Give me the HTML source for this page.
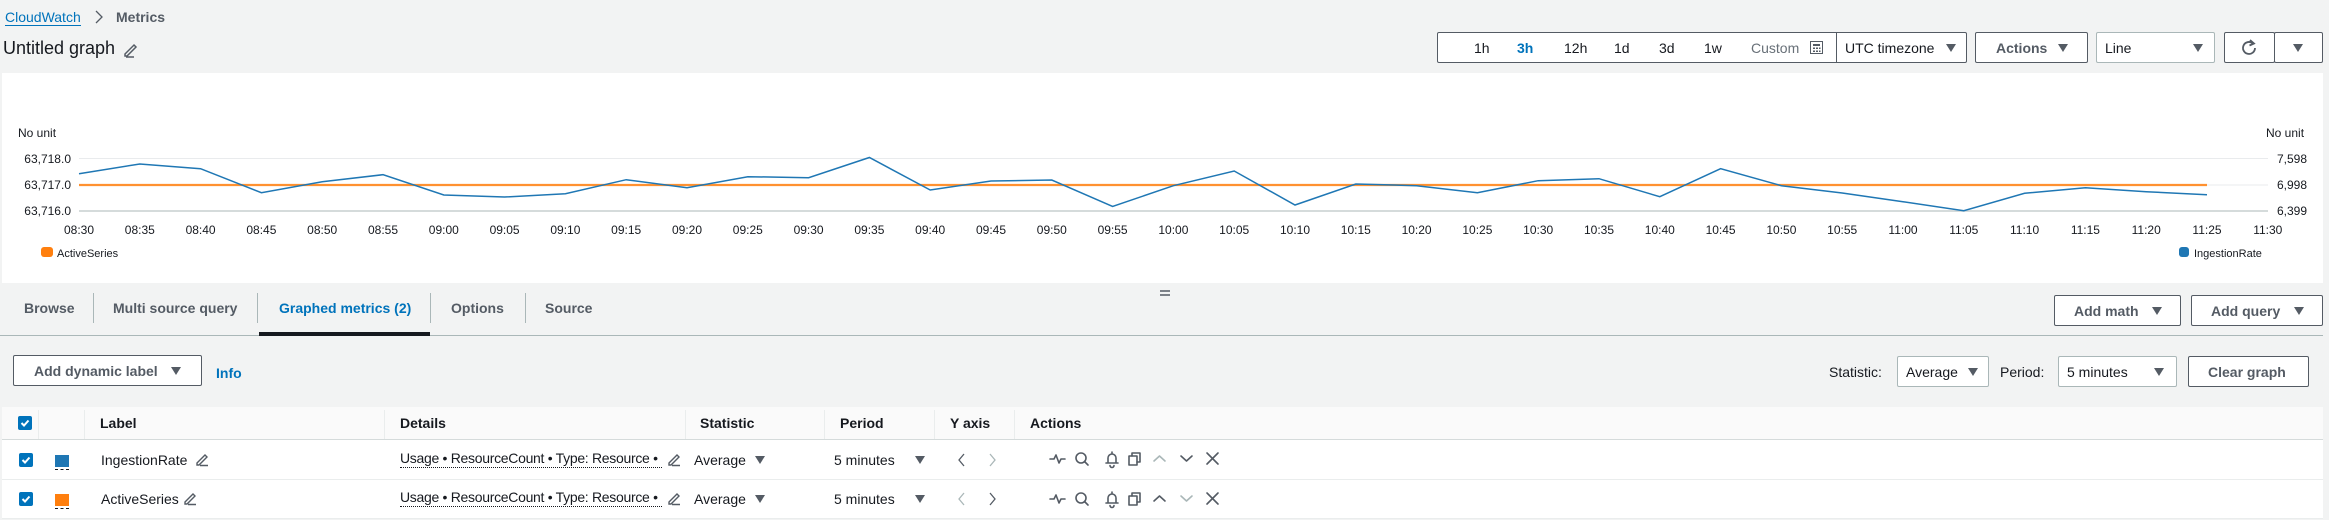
<!DOCTYPE html>
<html><head><meta charset="utf-8"><style>
*{box-sizing:border-box;margin:0;padding:0}
body{width:2329px;height:520px;overflow:hidden;background:#f2f3f3;font-family:"Liberation Sans",sans-serif;font-size:14px;color:#16191f;position:relative}
.a{position:absolute;white-space:nowrap}
.btn{position:absolute;border:1px solid #545b64;background:#fff;border-radius:2px}
.bt{font-weight:bold;color:#545b64}
.tri{display:block;width:0;height:0;border-left:5px solid transparent;border-right:5px solid transparent;border-top:8px solid #545b64}
.cb{position:absolute;width:14px;height:14px;background:#0073bb;border-radius:2px}
.vd{position:absolute;width:1px;background:#eaeded}
.hl{position:absolute;height:1px;background:#eaeded;left:2px;width:2321px}
svg{position:absolute;overflow:visible}
</style></head><body>
<!-- breadcrumb -->
<div class="a" style="left:5px;top:9px;color:#0073bb;font-size:14px;border-bottom:1px solid #0073bb;line-height:16px">CloudWatch</div>
<svg style="left:94px;top:9px" width="10" height="16"><path d="M2 2l6 6-6 6" fill="none" stroke="#545b64" stroke-width="1.3"/></svg>
<div class="a" style="left:116px;top:9px;color:#545b64;font-size:14px;font-weight:bold;line-height:16px">Metrics</div>
<div class="a" style="left:3px;top:37px;font-size:18px;line-height:22px">Untitled graph</div>
<svg style="left:122px;top:42px" width="16" height="16"><path d="M3 12L12 3l2 2-9 9H3z M4 15h8" fill="none" stroke="#545b64" stroke-width="1.5"/></svg>

<!-- time range toolbar -->
<div class="btn" style="left:1437px;top:32px;width:530px;height:31px"></div>
<div class="a" style="left:1474px;top:40px">1h</div>
<div class="a" style="left:1517px;top:40px;color:#0073bb;font-weight:bold">3h</div>
<div class="a" style="left:1564px;top:40px">12h</div>
<div class="a" style="left:1614px;top:40px">1d</div>
<div class="a" style="left:1659px;top:40px">3d</div>
<div class="a" style="left:1704px;top:40px">1w</div>
<div class="a" style="left:1751px;top:40px;color:#687078">Custom</div>
<svg style="left:1810px;top:41px" width="13" height="13"><rect x="0.5" y="0.5" width="12" height="12" fill="none" stroke="#545b64"/><path d="M3 3h7v2H3zM3 6.5h2v1.5H3zM6 6.5h2v1.5H6zM9 6.5h1.5v1.5H9zM3 9.5h2V11H3zM6 9.5h2V11H6zM9 9.5h1.5V11H9z" fill="#545b64"/></svg>
<div class="a" style="left:1836px;top:32px;width:1px;height:31px;background:#545b64"></div>
<div class="a" style="left:1845px;top:40px">UTC timezone</div>
<div class="a" style="left:1946px;top:44px"><span class="tri"></span></div>
<div class="btn" style="left:1975px;top:32px;width:113px;height:31px"></div>
<div class="a bt" style="left:1996px;top:40px">Actions</div>
<div class="a" style="left:2058px;top:44px"><span class="tri"></span></div>
<div class="btn" style="left:2096px;top:32px;width:119px;height:31px;border-color:#aab7b8"></div>
<div class="a" style="left:2105px;top:40px">Line</div>
<div class="a" style="left:2193px;top:44px"><span class="tri"></span></div>
<div class="btn" style="left:2224px;top:32px;width:51px;height:31px"></div>
<svg style="left:2241px;top:39px" width="16" height="17"><path d="M12 4.5A6 6 0 1 0 14 9" fill="none" stroke="#545b64" stroke-width="1.8"/><path d="M9 1l4 3.5-4.5 2" fill="none" stroke="#545b64" stroke-width="1.8"/></svg>
<div class="btn" style="left:2274px;top:32px;width:49px;height:31px"></div>
<div class="a" style="left:2293px;top:44px"><span class="tri"></span></div>

<!-- chart panel -->
<div class="a" style="left:2px;top:73px;width:2321px;height:210px;background:#fff"></div>
<div class="a" style="left:18px;top:126px;font-size:12px">No unit</div>
<div class="a" style="left:2266px;top:126px;font-size:12px">No unit</div>
<svg style="left:0;top:0" width="2329" height="290">
<g stroke="#e9ebed" stroke-width="1"><line x1="79" y1="158.5" x2="2268" y2="158.5"/><line x1="79" y1="185" x2="2268" y2="185"/></g>
<line x1="79" y1="211" x2="2268" y2="211" stroke="#d5dbdb" stroke-width="2"/>
<g font-family="Liberation Sans" font-size="12" fill="#16191f">
<text x="71" y="163" text-anchor="end">63,718.0</text>
<text x="71" y="189" text-anchor="end">63,717.0</text>
<text x="71" y="215" text-anchor="end">63,716.0</text>
<text x="2277" y="163">7,598</text>
<text x="2277" y="189">6,998</text>
<text x="2277" y="215">6,399</text>
<g text-anchor="middle">
<text x="79" y="234">08:30</text><text x="139.8" y="234">08:35</text><text x="200.6" y="234">08:40</text><text x="261.4" y="234">08:45</text><text x="322.2" y="234">08:50</text><text x="383" y="234">08:55</text><text x="443.8" y="234">09:00</text><text x="504.6" y="234">09:05</text><text x="565.4" y="234">09:10</text><text x="626.2" y="234">09:15</text><text x="687" y="234">09:20</text><text x="747.8" y="234">09:25</text><text x="808.6" y="234">09:30</text><text x="869.4" y="234">09:35</text><text x="930.2" y="234">09:40</text><text x="991" y="234">09:45</text><text x="1051.8" y="234">09:50</text><text x="1112.6" y="234">09:55</text><text x="1173.4" y="234">10:00</text><text x="1234.2" y="234">10:05</text><text x="1295" y="234">10:10</text><text x="1355.8" y="234">10:15</text><text x="1416.6" y="234">10:20</text><text x="1477.4" y="234">10:25</text><text x="1538.2" y="234">10:30</text><text x="1599" y="234">10:35</text><text x="1659.8" y="234">10:40</text><text x="1720.6" y="234">10:45</text><text x="1781.4" y="234">10:50</text><text x="1842.2" y="234">10:55</text><text x="1903" y="234">11:00</text><text x="1963.8" y="234">11:05</text><text x="2024.6" y="234">11:10</text><text x="2085.4" y="234">11:15</text><text x="2146.2" y="234">11:20</text><text x="2207" y="234">11:25</text><text x="2267.8" y="234">11:30</text>
</g>
<text x="57" y="257" font-size="11">ActiveSeries</text>
<text x="2194" y="257" font-size="11">IngestionRate</text>
</g>
<line x1="79" y1="185" x2="2207" y2="185" stroke="#ff9130" stroke-width="2.2"/>
<polyline fill="none" stroke="#1f77b4" stroke-width="1.5" points="79,173.7 139.8,164 200.6,168.7 261.4,192.7 322.2,181.7 383,174.7 443.8,195 504.6,197 565.4,193.7 626.2,179.7 687,187.7 747.8,176.7 808.6,177.7 869.4,157.5 930.2,190 991,181 1051.8,180 1112.6,206.5 1173.4,185.7 1234.2,171 1295,205 1355.8,184 1416.6,185.7 1477.4,192.7 1538.2,180.7 1599,178.7 1659.8,196.7 1720.6,168.7 1781.4,185.7 1842.2,193 1903,201.7 1963.8,210.7 2024.6,193.3 2085.4,187.7 2146.2,191.7 2207,194.7"/>
<rect x="41" y="247" width="12" height="10" rx="3" fill="#ff7f0e"/>
<rect x="2179" y="247" width="10" height="10" rx="3" fill="#1f77b4"/>
<g stroke="#545b64" stroke-width="1.5"><line x1="1160" y1="291" x2="1170" y2="291"/><line x1="1160" y1="295" x2="1170" y2="295"/></g>
</svg>

<!-- tabs -->
<div class="a bt" style="left:24px;top:300px">Browse</div>
<div class="a" style="left:93px;top:293px;width:1px;height:30px;background:#aab7b8"></div>
<div class="a bt" style="left:113px;top:300px">Multi source query</div>
<div class="a" style="left:257px;top:293px;width:1px;height:30px;background:#aab7b8"></div>
<div class="a" style="left:279px;top:300px;font-weight:bold;color:#0073bb">Graphed metrics (2)</div>
<div class="a" style="left:430px;top:293px;width:1px;height:30px;background:#aab7b8"></div>
<div class="a bt" style="left:451px;top:300px">Options</div>
<div class="a" style="left:525px;top:293px;width:1px;height:30px;background:#aab7b8"></div>
<div class="a bt" style="left:545px;top:300px">Source</div>
<div class="a" style="left:0;top:335px;width:2323px;height:1px;background:#aab7b8"></div>
<div class="a" style="left:259px;top:332px;width:171px;height:4px;background:#16191f"></div>
<div class="btn" style="left:2054px;top:295px;width:127px;height:31px"></div>
<div class="a bt" style="left:2074px;top:303px">Add math</div>
<div class="a" style="left:2152px;top:307px"><span class="tri"></span></div>
<div class="btn" style="left:2191px;top:295px;width:132px;height:31px"></div>
<div class="a bt" style="left:2211px;top:303px">Add query</div>
<div class="a" style="left:2294px;top:307px"><span class="tri"></span></div>

<!-- second toolbar -->
<div class="btn" style="left:13px;top:355px;width:189px;height:31px"></div>
<div class="a bt" style="left:34px;top:363px">Add dynamic label</div>
<div class="a" style="left:171px;top:367px"><span class="tri"></span></div>
<div class="a" style="left:216px;top:365px;color:#0073bb;font-weight:bold">Info</div>
<div class="a" style="left:1829px;top:364px">Statistic:</div>
<div class="btn" style="left:1897px;top:356px;width:92px;height:31px;border-color:#aab7b8"></div>
<div class="a" style="left:1906px;top:364px">Average</div>
<div class="a" style="left:1968px;top:368px"><span class="tri"></span></div>
<div class="a" style="left:2000px;top:364px">Period:</div>
<div class="btn" style="left:2058px;top:356px;width:119px;height:31px;border-color:#aab7b8"></div>
<div class="a" style="left:2067px;top:364px">5 minutes</div>
<div class="a" style="left:2154px;top:368px"><span class="tri"></span></div>
<div class="btn" style="left:2188px;top:356px;width:121px;height:31px"></div>
<div class="a bt" style="left:2208px;top:364px">Clear graph</div>

<!-- table -->
<div class="a" style="left:2px;top:407px;width:2321px;height:32px;background:#fafafa"></div>
<div class="a" style="left:2px;top:439px;width:2321px;height:80px;background:#fff"></div>
<div class="hl" style="top:439px;background:#d5dbdb"></div>
<div class="hl" style="top:479px"></div>
<div class="hl" style="top:518px"></div>
<div class="vd" style="left:38px;top:410px;height:29px"></div>
<div class="vd" style="left:84px;top:410px;height:29px"></div>
<div class="vd" style="left:384px;top:410px;height:29px"></div>
<div class="vd" style="left:685px;top:410px;height:29px"></div>
<div class="vd" style="left:824px;top:410px;height:29px"></div>
<div class="vd" style="left:934px;top:410px;height:29px"></div>
<div class="vd" style="left:1014px;top:410px;height:29px"></div>
<div class="cb" style="left:18px;top:416px"></div>
<svg style="left:18px;top:416px" width="14" height="14"><path d="M3.5 7l2.5 2.5 4.5-5" fill="none" stroke="#fff" stroke-width="2"/></svg>
<div class="a" style="left:100px;top:415px;font-weight:bold">Label</div>
<div class="a" style="left:400px;top:415px;font-weight:bold">Details</div>
<div class="a" style="left:700px;top:415px;font-weight:bold">Statistic</div>
<div class="a" style="left:840px;top:415px;font-weight:bold">Period</div>
<div class="a" style="left:950px;top:415px;font-weight:bold">Y axis</div>
<div class="a" style="left:1030px;top:415px;font-weight:bold">Actions</div>

<!-- row 1 -->
<div class="cb" style="left:19px;top:453px"></div>
<svg style="left:19px;top:453px" width="14" height="14"><path d="M3.5 7l2.5 2.5 4.5-5" fill="none" stroke="#fff" stroke-width="2"/></svg>
<div class="a" style="left:55px;top:455px;width:14px;height:12px;background:#1f77b4"></div>
<div class="a" style="left:55px;top:469px;width:14px;border-top:1px dashed #16191f"></div>
<div class="a" style="left:101px;top:452px">IngestionRate</div>
<svg style="left:195px;top:452px" width="14" height="14"><path d="M2 11L10 3l2 2-8 8H2z M5 13.5h8" fill="none" stroke="#545b64" stroke-width="1.4"/></svg>
<div class="a" style="left:400px;top:450px;border-bottom:1px dotted #16191f;line-height:17px;letter-spacing:-0.3px;width:262px;overflow:hidden">Usage • ResourceCount • Type: Resource •</div>
<svg style="left:667px;top:452px" width="14" height="14"><path d="M2 11L10 3l2 2-8 8H2z M5 13.5h8" fill="none" stroke="#545b64" stroke-width="1.4"/></svg>
<div class="a" style="left:694px;top:452px">Average</div>
<div class="a" style="left:755px;top:456px"><span class="tri"></span></div>
<div class="a" style="left:834px;top:452px">5 minutes</div>
<div class="a" style="left:915px;top:456px"><span class="tri"></span></div>
<svg style="left:955px;top:452px" width="45" height="16"><path d="M9 2L4 8l5 6" fill="none" stroke="#545b64" stroke-width="1.3"/><path d="M35 2l5 6-5 6" fill="none" stroke="#aab7b8" stroke-width="1.3"/></svg>

<!-- row 2 -->
<div class="cb" style="left:19px;top:492px"></div>
<svg style="left:19px;top:492px" width="14" height="14"><path d="M3.5 7l2.5 2.5 4.5-5" fill="none" stroke="#fff" stroke-width="2"/></svg>
<div class="a" style="left:55px;top:494px;width:14px;height:12px;background:#ff7f0e"></div>
<div class="a" style="left:55px;top:508px;width:14px;border-top:1px dashed #16191f"></div>
<div class="a" style="left:101px;top:491px">ActiveSeries</div>
<svg style="left:183px;top:491px" width="14" height="14"><path d="M2 11L10 3l2 2-8 8H2z M5 13.5h8" fill="none" stroke="#545b64" stroke-width="1.4"/></svg>
<div class="a" style="left:400px;top:489px;border-bottom:1px dotted #16191f;line-height:17px;letter-spacing:-0.3px;width:262px;overflow:hidden">Usage • ResourceCount • Type: Resource •</div>
<svg style="left:667px;top:491px" width="14" height="14"><path d="M2 11L10 3l2 2-8 8H2z M5 13.5h8" fill="none" stroke="#545b64" stroke-width="1.4"/></svg>
<div class="a" style="left:694px;top:491px">Average</div>
<div class="a" style="left:755px;top:495px"><span class="tri"></span></div>
<div class="a" style="left:834px;top:491px">5 minutes</div>
<div class="a" style="left:915px;top:495px"><span class="tri"></span></div>
<svg style="left:955px;top:491px" width="45" height="16"><path d="M9 2L4 8l5 6" fill="none" stroke="#aab7b8" stroke-width="1.3"/><path d="M35 2l5 6-5 6" fill="none" stroke="#545b64" stroke-width="1.3"/></svg>

<!-- action icons -->
<svg style="left:1048px;top:450px" width="180" height="60">
<g fill="none" stroke="#545b64" stroke-width="1.6" stroke-linecap="round" stroke-linejoin="round">
<path d="M2 9h4l2-4 3 8 2-4h4"/>
<circle cx="33" cy="8" r="5"/><path d="M36.5 11.5l3.5 3.5"/>
<path d="M58 13h12M60 13V8a4 4 0 0 1 8 0v5M62 15.5a2 2 0 0 0 4 0M64 2v2"/>
<rect x="81" y="6" width="8" height="9"/><path d="M84 6V3h8v9h-3"/>
<path d="M106 11l5.5-5 5.5 5" stroke="#aab7b8"/>
<path d="M133 6l5.5 5 5.5-5"/>
<path d="M159 3l11 11M170 3l-11 11"/>
<g transform="translate(0,40)">
<path d="M2 9h4l2-4 3 8 2-4h4"/>
<circle cx="33" cy="8" r="5"/><path d="M36.5 11.5l3.5 3.5"/>
<path d="M58 13h12M60 13V8a4 4 0 0 1 8 0v5M62 15.5a2 2 0 0 0 4 0M64 2v2"/>
<rect x="81" y="6" width="8" height="9"/><path d="M84 6V3h8v9h-3"/>
<path d="M106 11l5.5-5 5.5 5"/>
<path d="M133 6l5.5 5 5.5-5" stroke="#aab7b8"/>
<path d="M159 3l11 11M170 3l-11 11"/>
</g>
</g>
</svg>
</body></html>
